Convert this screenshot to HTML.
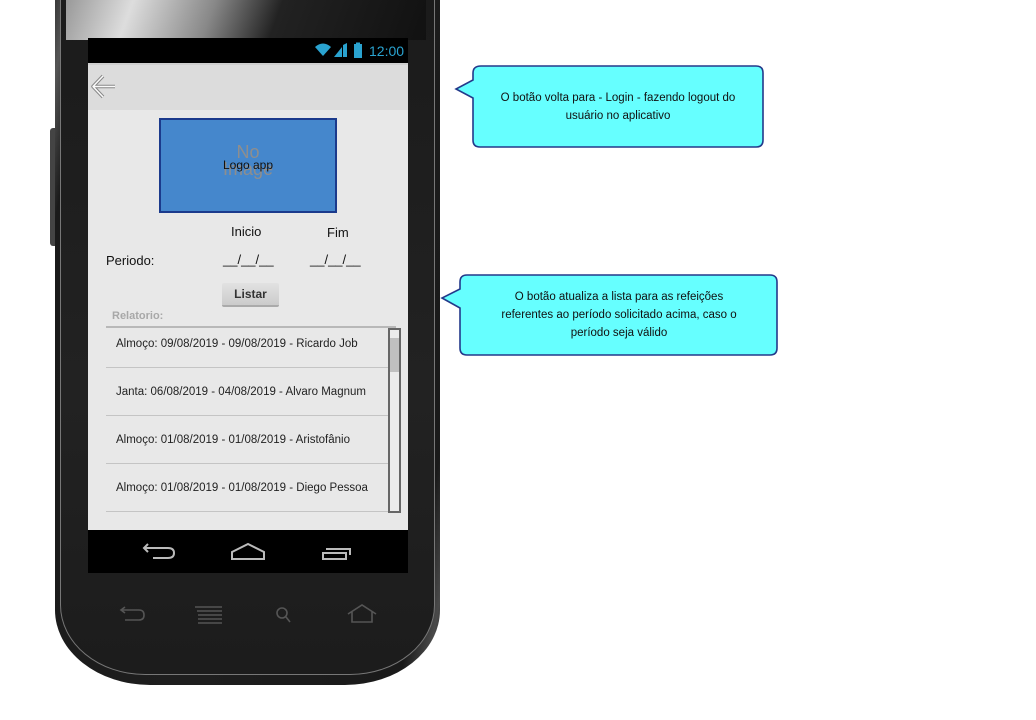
<!DOCTYPE html>
<html><head><meta charset="utf-8"><style>
*{margin:0;padding:0;box-sizing:border-box}
body{width:1036px;height:720px;background:#fff;position:relative;overflow:hidden;font-family:"Liberation Sans",sans-serif}
.a{position:absolute}
.phone{left:55px;top:-40px;width:385px;height:725px;border-radius:60px 60px 95px 95px/40px 40px 75px 75px;background:linear-gradient(100deg,#2a2a2a 0%,#555 4%,#1a1a1a 9%,#1e1e1e 50%,#1a1a1a 92%,#4a4a4a 97%,#222 100%)}
.inner{left:60px;top:-40px;width:375px;height:715px;border-radius:55px 55px 85px 85px/40px 40px 70px 70px;border:1.5px solid #777;background:linear-gradient(180deg,#1a1a1a,#222 60%,#1c1c1c)}
.gloss{left:66px;top:0;width:360px;height:40px;background:linear-gradient(110deg,#999 0%,#ddd 18%,#888 40%,#222 58%,#111 100%)}
.t{position:absolute;white-space:nowrap;color:#111}
.row{position:absolute;left:106px;width:282px;height:48px;border-bottom:1px solid #c4c4c4;font-size:11.5px;color:#222;padding-left:10px;line-height:48px}
</style></head><body>
<div class="a" style="left:50px;top:128px;width:8px;height:118px;background:#444;border-radius:3px"></div>
<div class="a phone"></div>
<div class="a inner"></div>
<div class="a gloss"></div>
<div class="a" style="left:88px;top:38px;width:320px;height:535px;background:#e8e8e8"></div>
<div class="a" style="left:88px;top:38px;width:320px;height:25px;background:#000"></div>
<svg class="a" style="left:312px;top:41px" width="56" height="18" viewBox="0 0 56 18">
<path d="M3 6 Q11 -1 19 6 L11 15 Z" fill="#2aa3d0"/>
<path d="M22 16 L30 6 L30 16 Z M31 4 L35 2 L35 16 L31 16Z" fill="#2aa3d0"/>
<rect x="42" y="3" width="8" height="14" fill="#2aa3d0"/><rect x="44" y="1.5" width="4" height="2" fill="#2aa3d0"/>
</svg>
<div class="t" style="left:369px;top:43px;font-size:14px;color:#2aa3d0">12:00</div>
<div class="a" style="left:88px;top:63px;width:320px;height:47px;background:#dcdcdc;border-top:2px solid #cfcfcf"></div>
<svg class="a" style="left:90px;top:74px" width="28" height="26" viewBox="0 0 28 26"><path d="M13 2 L3 12.5 L13 23 M3 12.5 H25" stroke="#888" stroke-width="3.5" fill="none" stroke-linejoin="round"/><path d="M13 2 L3 12.5 L13 23 M3 12.5 H25" stroke="#fafafa" stroke-width="1.5" fill="none" stroke-linejoin="round"/></svg>
<div class="a" style="left:159px;top:118px;width:178px;height:95px;background:#4587cc;border:2px solid #1b3a8c"></div>
<div class="t" style="left:159px;top:144px;width:178px;text-align:center;font-size:18px;line-height:17px;color:#8e8e8e">No<br>Image</div>
<div class="t" style="left:159px;top:158px;width:178px;text-align:center;font-size:12px">Logo app</div>
<div class="t" style="left:231px;top:224px;font-size:13px">Inicio</div>
<div class="t" style="left:327px;top:225px;font-size:13px">Fim</div>
<div class="t" style="left:106px;top:253px;font-size:13px">Periodo:</div>
<div class="t" style="left:223px;top:252px;font-size:13px">__/__/__</div>
<div class="t" style="left:310px;top:252px;font-size:13px">__/__/__</div>
<div class="a" style="left:222px;top:283px;width:57px;height:24px;background:linear-gradient(#e2e2e2,#cbcbcb);border-radius:2px;border-bottom:2px solid #aaa;font-size:12px;font-weight:bold;color:#333;text-align:center;line-height:22px">Listar</div>
<div class="t" style="left:112px;top:310px;font-size:11px;font-weight:bold;color:#a8a8a8">Relatorio:</div>
<div class="a" style="left:106px;top:326px;width:290px;height:2px;background:#b8b8b8"></div>
<div class="row" style="top:320px">Almoço: 09/08/2019 - 09/08/2019 - Ricardo Job</div>
<div class="row" style="top:368px">Janta: 06/08/2019 - 04/08/2019 - Alvaro Magnum</div>
<div class="row" style="top:416px">Almoço: 01/08/2019 - 01/08/2019 - Aristofânio</div>
<div class="row" style="top:464px">Almoço: 01/08/2019 - 01/08/2019 - Diego Pessoa</div>
<div class="a" style="left:388px;top:328px;width:13px;height:185px;border:2px solid #666;background:#ececec"></div>
<div class="a" style="left:390px;top:338px;width:9px;height:34px;background:#c0c0c0"></div>
<div class="a" style="left:88px;top:530px;width:320px;height:43px;background:#000"></div>
<svg class="a" style="left:140px;top:540px" width="220" height="24" viewBox="0 0 220 24" fill="none" stroke="#bbb" stroke-width="2">
<path d="M8 4 L4 8 L8 12 M4 8 H28 Q34 8 34 13 Q34 18 28 18 H13"/>
<path d="M92 12 L108 4 L124 12 V19 H92 Z"/>
<path d="M183 13 H206 V19 H183 Z M186 9 H210 V15"/>
</svg>
<svg class="a" style="left:115px;top:602px" width="270" height="26" viewBox="0 0 270 26" fill="none" stroke="#555" stroke-width="1.6">
<path d="M10 5 L6 8 L10 11 M6 8 H24 Q29 8 29 13 Q29 18 24 18 H10"/>
<path d="M80 5 H107 M82 9 H107 M83 13 H107 M83 17 H107 M83 21 H107"/>
<circle cx="167" cy="11" r="5"/><path d="M171 15 L175 20"/>
<path d="M233 12 L247 3 L261 12 M237 10 V20 H257 V10"/>
</svg>
<svg class="a" style="left:440px;top:60px" width="350" height="300">
<path d="M41 6 H316 Q323 6 323 13 V80 Q323 87 316 87 H40 Q33 87 33 80 V38 L16 29 L33 20 V13 Q33 6 41 6Z" fill="#66ffff" stroke="#23398a" stroke-width="1.6"/>
<path d="M27 215 H330 Q337 215 337 222 V288 Q337 295 330 295 H27 Q20 295 20 288 V248 L2 238 L20 229 V222 Q20 215 27 215Z" fill="#66ffff" stroke="#23398a" stroke-width="1.6"/>
</svg>
<div class="t" style="left:484px;top:89px;width:268px;text-align:center;font-size:11.5px;line-height:18px;white-space:normal">O botão volta para - Login - fazendo logout do usuário no aplicativo</div>
<div class="t" style="left:488px;top:288px;width:262px;text-align:center;font-size:11.5px;line-height:18px;white-space:normal">O botão atualiza a lista para as refeições referentes ao período solicitado acima, caso o período seja válido</div>
</body></html>
